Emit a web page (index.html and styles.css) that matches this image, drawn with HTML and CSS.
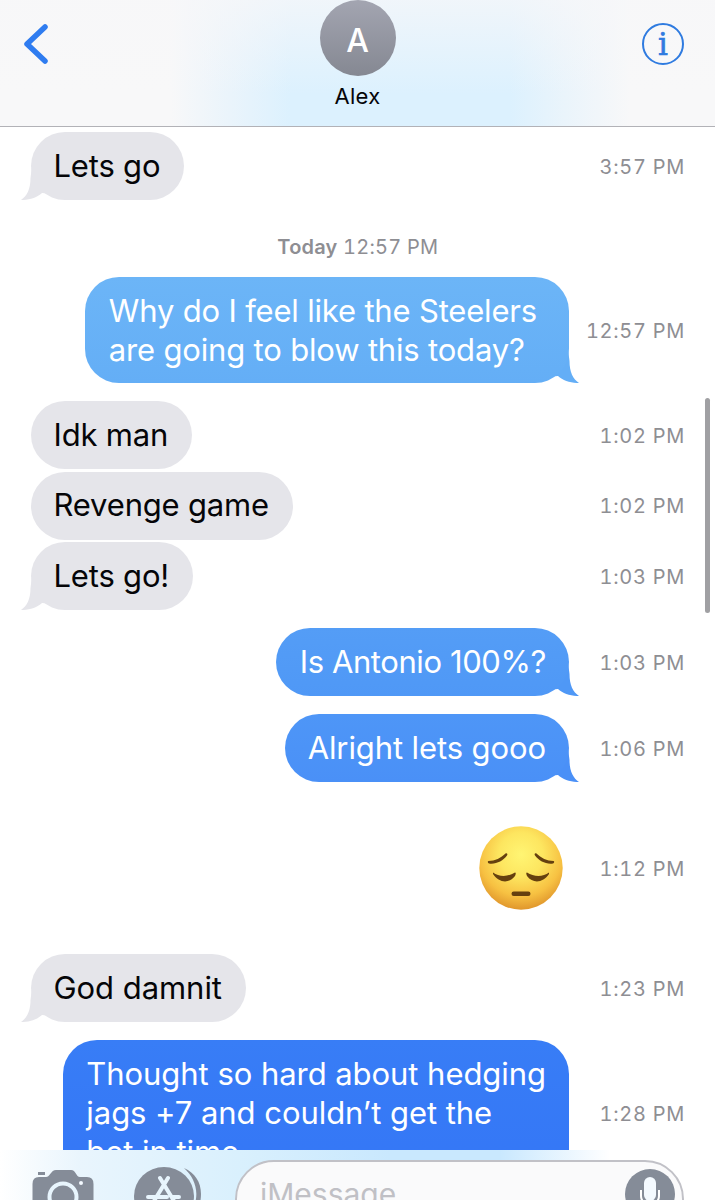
FILE: index.html
```html
<!DOCTYPE html>
<html lang="en">
<head>
    <meta charset="utf-8" />
    <meta name="viewport" content="width=device-width, initial-scale=1" />
    <title>Alex</title>
    <link rel="stylesheet" href="styles.css">
</head>
<body>
    <!-- Shared bubble tail -->
    <svg class="defs" width="0" height="0">
        <symbol id="tail" viewBox="0 0 32 34">
            <path d="M11 0L9.500 12C9.500 23 6 30 0 34C8 34.3 16 31.5 21 27L32 28V0Z" />
        </symbol>
    </svg>

    <div class="phone">
        <header class="header">
            <svg class="back" width="26" height="42" viewBox="0 0 26 42">
                <path d="M22 4L4 21L22 38" />
            </svg>
            <div class="contact">
                <div class="avatar">A</div>
                <div class="name">Alex</div>
            </div>
            <div class="info">i</div>
        </header>

        <main class="thread">
            <div class="row">
                <div class="bubble received">Lets go<svg class="tail"><use href="#tail" /></svg></div>
                <time>3:57 PM</time>
            </div>

            <div class="day"><b>Today</b> 12:57 PM</div>

            <div class="row sent-row">
                <div class="bubble sent tone-1">Why do I feel like the Steelers<br>are going to blow this today?<svg class="tail"><use href="#tail" /></svg></div>
                <time>12:57 PM</time>
            </div>
            <div class="row spaced">
                <div class="bubble received">Idk man</div>
                <time>1:02 PM</time>
            </div>
            <div class="row grouped">
                <div class="bubble received">Revenge game</div>
                <time>1:02 PM</time>
            </div>
            <div class="row grouped">
                <div class="bubble received">Lets go!<svg class="tail"><use href="#tail" /></svg></div>
                <time>1:03 PM</time>
            </div>
            <div class="row sent-row spaced">
                <div class="bubble sent tone-2">Is Antonio 100%?<svg class="tail"><use href="#tail" /></svg></div>
                <time>1:03 PM</time>
            </div>
            <div class="row sent-row spaced">
                <div class="bubble sent tone-3">Alright lets gooo<svg class="tail"><use href="#tail" /></svg></div>
                <time>1:06 PM</time>
            </div>

            <div class="row sent-row emoji-row">
                <svg class="emoji" width="84" height="84" viewBox="0 0 84 84">
                    <defs>
                        <radialGradient id="face" cx="50%" cy="34%" r="66%">
                            <stop offset="0" stop-color="#fff573" />
                            <stop offset="0.4" stop-color="#fde660" />
                            <stop offset="0.75" stop-color="#f7c142" />
                            <stop offset="1" stop-color="#e0962c" />
                        </radialGradient>
                    </defs>
                    <circle cx="42" cy="42" r="41.700" fill="url(#face)" />
                    <g fill="#65400f">
                        <path d="M14 46.500C20 51 29 51 36 46.500C37 46.500 37 48 36 50C30 58 20 57 14 48Z" />
                        <path d="M70 46.500C64 51 55 51 48 46.500C47 46.500 47 48 48 50C54 58 64 57 70 48Z" />
                        <rect x="32.500" y="65.500" width="19" height="4.500" rx="2.200" />
                        <path d="M9.500 35C16 35 22 32 26.500 27.500C28 26.500 29 28 28 29.500C24 35 17 38.500 10 37.500C8.500 37 8.500 35 9.500 35Z" />
                        <path d="M74.500 35C68 35 62 32 57.500 27.500C56 26.500 55 28 56 29.500C60 35 67 38.500 74 37.500C75.500 37 75.500 35 74.500 35Z" />
                    </g>
                </svg>
                <time>1:12 PM</time>
            </div>

            <div class="row after-emoji">
                <div class="bubble received wide">God damnit<svg class="tail"><use href="#tail" /></svg></div>
                <time>1:23 PM</time>
            </div>
            <div class="row sent-row spaced">
                <div class="bubble sent tone-4 wide">Thought so hard about hedging<br>jags +7 and couldn’t get the<br>bet in time</div>
                <time>1:28 PM</time>
            </div>
            <div class="scrollbar"></div>
        </main>

        <footer class="composer">
            <svg class="camera" width="62" height="50" viewBox="0 0 62 50">
                <rect x="6" y="2" width="7" height="3" />
                <path d="M7 7H14C18 7 19 0 24 0H39C44 0 44 7 48 7H55Q61.500 7 61.500 14V50H0.500V14Q0.500 7 7 7Z" />
                <circle cx="31" cy="27" r="13.500" class="line" />
                <circle cx="49" cy="13" r="2" class="dot" />
            </svg>
            <svg class="apps" width="67" height="62" viewBox="0 0 67 62">
                <path d="M50 1C61 6 67 15 67 27C67 40 61 50 52 58L57 46C67 28 62 12 50 1Z" />
                <ellipse cx="30" cy="29" rx="30" ry="29" />
                <path class="line" d="M26 11L40 34M34 11L20 34M14 30H33M38 30H45" />
            </svg>
            <div class="field">
                <span>iMessage</span>
                <svg class="mic" width="50" height="50" viewBox="0 0 50 50">
                    <circle cx="25" cy="25" r="25" />
                    <rect class="dot" x="19" y="8" width="12" height="24" rx="6" />
                    <path class="stand" d="M16 21V27C16 38 34 38 34 27V21M25 36V42" />
                </svg>
            </div>
        </footer>
    </div>
</body>
</html>
```
FILE: styles.css
```css
* {
    margin: 0;
    padding: 0;
    box-sizing: border-box;
}

body {
    font-family: Inter, 'Helvetica Neue', Arial, sans-serif;
    background: #fff;
    color: #050508;
}

.defs {
    position: absolute;
}

.phone {
    width: 715px;
    height: 1200px;
    display: flex;
    flex-direction: column;
    overflow: hidden;
}

/* Header */
.header {
    height: 127px;
    flex: none;
    display: grid;
    grid-template-columns: 1fr 120px 1fr;
    align-items: start;
    padding: 0 31px 0 23px;
    border-bottom: 1px solid #b2b2b7;
    background:
        linear-gradient(rgba(247, 247, 249, 0.75), rgba(247, 247, 249, 0) 75%),
        linear-gradient(90deg, #f8f8f9 170px, #eaf4fb 230px, #dcf1fe 290px, #dcf1fe 510px, #eaf4fb 565px, #f8f8f9 630px);
}

.back {
    margin-top: 23px;
}

.back path {
    fill: none;
    stroke: #2f7cf0;
    stroke-width: 5.500;
    stroke-linecap: round;
    stroke-linejoin: round;
}

.contact {
    display: flex;
    flex-direction: column;
    align-items: center;
    margin-left: 4px;
    margin-right: -4px;
}

.avatar {
    width: 76px;
    height: 76px;
    border-radius: 50%;
    background: linear-gradient(#a3a5b1, #858892);
    color: #fff;
    font-size: 32px;
    font-weight: 500;
    line-height: 81px;
    text-align: center;
}

.name {
    margin-top: 6px;
    font-size: 22px;
    line-height: 28px;
    letter-spacing: 0.3px;
}

.info {
    justify-self: end;
    width: 42px;
    height: 42px;
    margin-top: 23px;
    border: 2px solid #2f7be0;
    border-radius: 50%;
    color: #2f7be0;
    font-family: 'DejaVu Serif', serif;
    font-size: 31px;
    line-height: 38px;
    text-align: center;
    -webkit-text-stroke: 0.6px #2f7be0;
}

/* Messages */
.thread {
    position: relative;
    height: 1023px;
    flex: none;
    padding: 5px 30px 0 30.500px;
    overflow: hidden;
}

.row {
    display: flex;
    align-items: center;
    justify-content: space-between;
}

.sent-row {
    justify-content: flex-end;
}

.sent-row time {
    width: 116px;
    text-align: right;
}

.spaced {
    margin-top: 18px;
}

.grouped {
    margin-top: 2.500px;
}

time,
.day {
    color: #8e8e93;
    font-size: 20px;
    font-variant-numeric: tabular-nums;
    letter-spacing: 0.7px;
    white-space: nowrap;
}

time {
    padding-top: 1px;
}

.day {
    margin: 33px 0 16px;
    line-height: 28px;
    text-align: center;
    letter-spacing: 0.2px;
}

.day b {
    font-weight: 600;
}

.bubble {
    position: relative;
    padding: 13.500px 24px 15.500px 23px;
    border-radius: 34px;
    font-size: 31px;
    line-height: 39px;
    letter-spacing: -0.18px;
    white-space: nowrap;
}

.wide {
    letter-spacing: -0.05px;
}

.received {
    background: #e5e5ea;
    color: #050508;
    fill: #e5e5ea;
}

.sent {
    padding-right: 23px;
    color: #fff;
}

.tone-1 {
    padding: 13.500px 32px 14.500px 24px;
    background: linear-gradient(#6cb5f7, #64aef6);
    fill: #64aef6;
}

.tone-2 {
    padding-left: 24px;
    letter-spacing: -0.4px;
    background: linear-gradient(#549df6, #4f98f6);
    fill: #4f98f6;
}

.tone-3 {
    letter-spacing: -0.1px;
    background: linear-gradient(#4e96f7, #4a90f7);
    fill: #4a90f7;
}

.tone-4 {
    background: linear-gradient(#387df6, #3476f6);
}

.tail {
    position: absolute;
    left: -9.500px;
    bottom: 0;
    width: 32px;
    height: 34px;
    z-index: -1;
}

.sent .tail {
    left: auto;
    right: -9.500px;
    transform: scaleX(-1);
}

.emoji-row {
    margin-top: 44px;
}

.emoji {
    margin-right: 6px;
}

.after-emoji {
    margin-top: 44px;
}

.scrollbar {
    position: absolute;
    top: 271px;
    right: 5px;
    width: 5px;
    height: 215px;
    border-radius: 3px;
    background: #a0a0a3;
}

/* Composer */
.composer {
    height: 50px;
    flex: none;
    display: flex;
    align-items: flex-start;
    padding: 0 31px 0 32px;
    overflow: hidden;
    background: linear-gradient(90deg, #fff 0, #e9f5fd 80px, #d9f0fd 240px, #c9e8fe 390px, #c9e8fe 500px, #fff 610px);
    fill: #858c98;
}

.composer svg {
    flex: none;
}

.camera {
    margin-top: 20px;
}

.apps {
    margin: 17px 34px 0 40px;
}

.line {
    fill: none;
    stroke: #e8f5fd;
    stroke-width: 4;
    stroke-linecap: round;
}

.dot {
    fill: #f4faff;
}

.field {
    flex: 1;
    height: 78px;
    margin-top: 10px;
    padding: 7px 7px 0 23px;
    display: flex;
    justify-content: space-between;
    align-items: flex-start;
    border: 2px solid #c1c1c7;
    border-radius: 39px;
    background: #fafafb;
    color: #c0c0c5;
    font-size: 30px;
}

.field span {
    margin-top: 7px;
    line-height: 36px;
}

.stand {
    fill: none;
    stroke: #fff;
    stroke-width: 2;
}
```
